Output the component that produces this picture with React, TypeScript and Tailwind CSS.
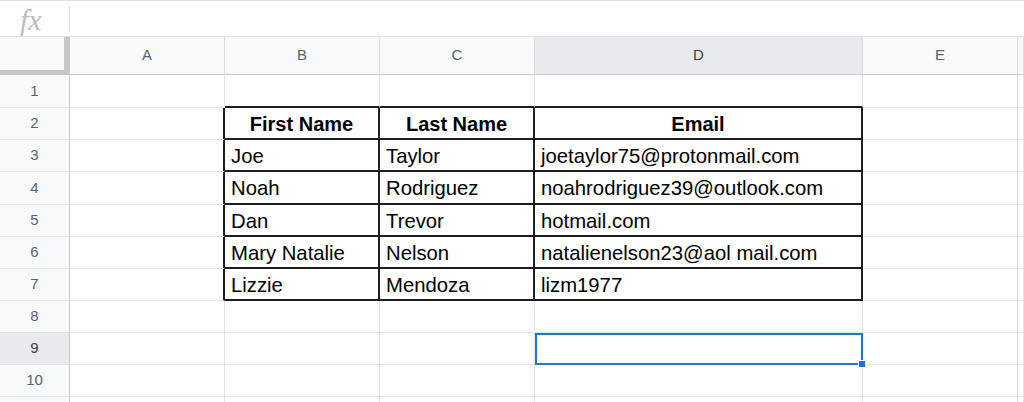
import React from "react";

const colLetters = ["A", "B", "C", "D", "E", ""];
const rowHeights = ["h-[33px]", "h-[32px]", "h-[32px]", "h-[33px]", "h-[32px]", "h-[32px]", "h-[32px]", "h-[32px]", "h-[32px]", "h-[32px]", "h-[32px]"];

const table: string[][] = [
  ["First Name", "Last Name", "Email"],
  ["Joe", "Taylor", "joetaylor75@protonmail.com"],
  ["Noah", "Rodriguez", "noahrodriguez39@outlook.com"],
  ["Dan", "Trevor", "hotmail.com"],
  ["Mary Natalie", "Nelson", "natalienelson23@aol mail.com"],
  ["Lizzie", "Mendoza", "lizm1977"],
];

const widths = ["w-[155px]", "w-[155px]", "w-[155px]", "w-[155px]", "w-[328px]", "w-[155px]", "flex-1"];

function DataCell({ r, c }: { r: number; c: number }) {
  const w = widths[c];
  const inTable = r >= 2 && r <= 7 && c >= 2 && c <= 4;
  const isHeader = r === 2 && inTable;
  const selected = r === 9 && c === 4;
  let border = "border-r border-b border-[#e2e3e3]";
  if (inTable) border = "border-r-2 border-b-2 border-[#1e1e1e]";
  else if (c === 1 && r >= 2 && r <= 7) border = "border-r-2 border-b border-r-[#1e1e1e] border-b-[#e2e3e3]";
  else if (r === 1 && c >= 2 && c <= 4) border = "border-r border-b-2 border-r-[#e2e3e3] border-b-[#1e1e1e]";
  const text = inTable ? table[r - 2][c - 2] : "";
  return (
    <div className={`${w} shrink-0 h-full relative flex items-center bg-white ${border} ${selected ? "z-10" : ""}`}>
      {text && (
        isHeader ? (
          <span className="w-full text-center font-bold text-[20px] text-black leading-none mt-[2px]">{text}</span>
        ) : (
          <span className="pl-[6px] text-[20.3px] text-black leading-none whitespace-nowrap mt-[2px]">{text}</span>
        )
      )}
      {selected && (
        <div className="absolute left-0 top-0 right-[-1px] bottom-[-1px] border-2 border-[#1a73e8]">
          <div className="absolute right-[-5px] bottom-[-5px] w-[8px] h-[8px] bg-[#1a73e8] border border-white" />
        </div>
      )}
    </div>
  );
}

export default function App() {
  return (
    <div className="w-[1024px] h-[402px] overflow-hidden bg-white font-['Liberation_Sans',Arial,sans-serif]">
      {/* formula bar */}
      <div className="h-[37px] border-t border-b border-[#e0e0e0] flex items-center">
        <div className="w-[70px] flex items-center justify-between pl-[20px]">
          <span className="font-['Liberation_Serif',serif] italic text-[30px] text-[#bdbdbd] leading-none mt-[2px]">fx</span>
          <div className="w-px h-[25px] bg-[#dadce0]" />
        </div>
        <div className="flex-1" />
      </div>
      {/* column headers */}
      <div className="flex h-[38px]">
        <div className="w-[70px] shrink-0 h-full bg-[#f8f9fa] border-r-[6px] border-b-[5px] border-[#c4c7c5] mb-[-1px]" />
        {colLetters.map((l, i) => (
          <div
            key={i}
            className={`${widths[i + 1]} shrink-0 h-full flex items-center justify-center text-[15px] border-r border-b border-r-[#dadce0] border-b-[#c8cacc] ${
              i === 3 ? "bg-[#e8eaed] text-[#3c4043]" : "bg-[#f8f9fa] text-[#5f6368]"
            }`}
          >
            {l}
          </div>
        ))}
      </div>
      {/* rows */}
      {rowHeights.map((h, idx) => {
        const r = idx + 1;
        return (
          <div key={r} className={`flex ${h}`}>
            <div
              className={`w-[70px] shrink-0 h-full flex items-center justify-center text-[15px] border-r border-b border-r-[#c8cacc] border-b-[#e2e3e3] ${
                r === 9 ? "bg-[#e8eaed] text-[#3c4043]" : "bg-[#f8f9fa] text-[#5f6368]"
              }`}
            >
              {r <= 10 ? r : ""}
            </div>
            {[1, 2, 3, 4, 5, 6].map((c) => (
              <DataCell key={c} r={r} c={c} />
            ))}
          </div>
        );
      })}
    </div>
  );
}
